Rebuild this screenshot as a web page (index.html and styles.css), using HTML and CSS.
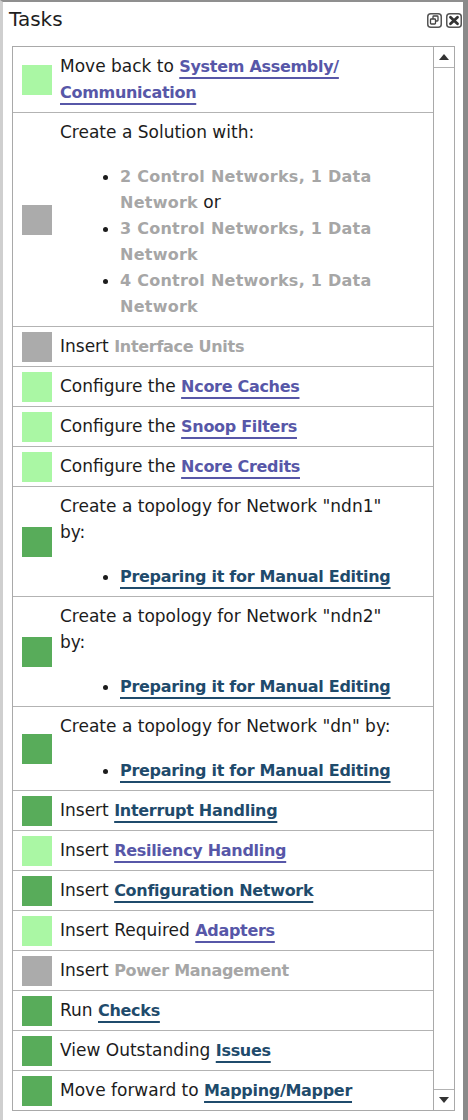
FILE: index.html
```html
<!DOCTYPE html>
<html>
<head>
<meta charset="utf-8">
<link rel="stylesheet" href="styles.css">
</head>
<body>
<div class="window">
  <div class="titlebar">
    <span class="title">Tasks</span>
    <div class="tools">
      <svg class="tool" width="15" height="15" viewBox="0 0 15 15">
        <rect x="0.75" y="0.75" width="13.5" height="13.5" rx="3" fill="#fff" stroke="#555" stroke-width="1.5"/>
        <rect x="6" y="3" width="5" height="5" rx="0.8" fill="none" stroke="#444" stroke-width="1.3"/>
        <rect x="3.5" y="6" width="5" height="5" rx="0.8" fill="#fff" stroke="#444" stroke-width="1.3"/>
      </svg>
      <svg class="tool" width="16" height="15" viewBox="0 0 16 15">
        <rect x="0.75" y="0.75" width="14.5" height="13.5" rx="3" fill="#fff" stroke="#555" stroke-width="1.5"/>
        <path d="M4.5 4.2 L11.5 10.8 M11.5 4.2 L4.5 10.8" stroke="#333" stroke-width="2.8" stroke-linecap="round"/>
      </svg>
    </div>
  </div>
  <div class="panel">
    <div class="list">
      <div class="row">
        <span class="st st-light"></span>
        <div class="txt">Move back to <a class="lk lk-light">System Assembly/ Communication</a></div>
      </div>
      <div class="row">
        <span class="st st-gray"></span>
        <div class="txt">Create a Solution with:
          <ul>
            <li><span class="lk lk-off wide">2 Control Networks, 1 Data Network</span> or</li>
            <li><span class="lk lk-off wide">3 Control Networks, 1 Data Network</span></li>
            <li><span class="lk lk-off wide">4 Control Networks, 1 Data Network</span></li>
          </ul>
        </div>
      </div>
      <div class="row">
        <span class="st st-gray"></span>
        <div class="txt">Insert <span class="lk lk-off">Interface Units</span></div>
      </div>
      <div class="row">
        <span class="st st-light"></span>
        <div class="txt">Configure the <a class="lk lk-light">Ncore Caches</a></div>
      </div>
      <div class="row">
        <span class="st st-light"></span>
        <div class="txt">Configure the <a class="lk lk-light">Snoop Filters</a></div>
      </div>
      <div class="row">
        <span class="st st-light"></span>
        <div class="txt">Configure the <a class="lk lk-light">Ncore Credits</a></div>
      </div>
      <div class="row">
        <span class="st st-dark"></span>
        <div class="txt">Create a topology for Network "ndn1" by:
          <ul>
            <li><a class="lk lk-dark">Preparing it for Manual Editing</a></li>
          </ul>
        </div>
      </div>
      <div class="row">
        <span class="st st-dark"></span>
        <div class="txt">Create a topology for Network "ndn2" by:
          <ul>
            <li><a class="lk lk-dark">Preparing it for Manual Editing</a></li>
          </ul>
        </div>
      </div>
      <div class="row">
        <span class="st st-dark"></span>
        <div class="txt">Create a topology for Network "dn" by:
          <ul>
            <li><a class="lk lk-dark">Preparing it for Manual Editing</a></li>
          </ul>
        </div>
      </div>
      <div class="row">
        <span class="st st-dark"></span>
        <div class="txt">Insert <a class="lk lk-dark">Interrupt Handling</a></div>
      </div>
      <div class="row">
        <span class="st st-light"></span>
        <div class="txt">Insert <a class="lk lk-light">Resiliency Handling</a></div>
      </div>
      <div class="row">
        <span class="st st-dark"></span>
        <div class="txt">Insert <a class="lk lk-dark">Configuration Network</a></div>
      </div>
      <div class="row">
        <span class="st st-light"></span>
        <div class="txt">Insert Required <a class="lk lk-light">Adapters</a></div>
      </div>
      <div class="row">
        <span class="st st-gray"></span>
        <div class="txt">Insert <span class="lk lk-off">Power Management</span></div>
      </div>
      <div class="row">
        <span class="st st-dark"></span>
        <div class="txt">Run <a class="lk lk-dark">Checks</a></div>
      </div>
      <div class="row">
        <span class="st st-dark"></span>
        <div class="txt">View Outstanding <a class="lk lk-dark">Issues</a></div>
      </div>
      <div class="row">
        <span class="st st-dark"></span>
        <div class="txt">Move forward to <a class="lk lk-dark">Mapping/Mapper</a></div>
      </div>
    </div>
    <div class="scrollbar">
      <div class="sbtn"><span class="arrow up"></span></div>
      <div class="track"></div>
      <div class="sbtn"><span class="arrow down"></span></div>
    </div>
  </div>
</div>
</body>
</html>
```

FILE: styles.css
```css
html, body {
  margin: 0;
  padding: 0;
}
body {
  background: #8a8a8a;
  width: 468px;
  height: 1120px;
  overflow: hidden;
  font-family: "DejaVu Sans", "Liberation Sans", sans-serif;
  color: #1c1c1c;
}
.window {
  box-sizing: border-box;
  width: 463px;
  height: 1120px;
  background: #fff;
  border-top: 2px solid #8f8f8f;
  border-left: 3px solid #cfcfcf;
}
.titlebar {
  height: 44px;
  display: flex;
  align-items: flex-start;
  justify-content: space-between;
}
.title {
  font-size: 20px;
  line-height: 22px;
  padding-left: 6px;
  padding-top: 6px;
  color: #1e1e1e;
}
.tools {
  display: flex;
  gap: 4px;
  padding-top: 11px;
  padding-right: 1px;
}
.tool {
  display: block;
}
.panel {
  margin-left: 9px;
  width: 443px;
  height: 1065px;
  box-sizing: border-box;
  border: 1px solid #a9a9a9;
  display: flex;
}
.list {
  width: 420px;
  flex: none;
  font-size: 17px;
  line-height: 26px;
}
.row {
  display: flex;
  align-items: center;
  padding-left: 9px;
  border-bottom: 1px solid #b3b3b3;
}
.row:last-child {
  border-bottom: none;
}
.st {
  flex: none;
  width: 30px;
  height: 30px;
  margin-right: 8px;
}
.st-light { background: #aaf7a4; }
.st-dark { background: #58ac5a; }
.st-gray { background: #ababab; }
.txt {
  flex: 1;
  padding: 6px 23px 7px 0;
}
.txt ul {
  margin: 18px 0 0 0;
  padding-left: 60px;
}
.lk {
  font-size: 16px;
  line-height: 18px;
  font-weight: bold;
  letter-spacing: -0.3px;
}
.lk.wide {
  letter-spacing: 0.25px;
}
a.lk {
  text-decoration: underline;
  text-decoration-thickness: 2px;
  text-underline-offset: 5px;
  text-decoration-skip-ink: none;
}
.lk-light { color: #5757a8; }
.lk-dark { color: #1f4b6c; text-decoration-color: #2a6272; }
.lk-off { color: #a6a6a6; }
.scrollbar {
  flex: 1;
  border-left: 1px solid #a9a9a9;
  display: flex;
  flex-direction: column;
}
.sbtn {
  height: 20px;
  flex: none;
  display: flex;
  align-items: center;
  justify-content: center;
}
.sbtn:first-child { border-bottom: 1px solid #b3b3b3; }
.sbtn:last-child { border-top: 1px solid #b3b3b3; }
.track {
  flex: 1;
}
.arrow {
  width: 0;
  height: 0;
  border-left: 5px solid transparent;
  border-right: 5px solid transparent;
}
.arrow.up { border-bottom: 6px solid #333; }
.arrow.down { border-top: 6px solid #333; }
```
